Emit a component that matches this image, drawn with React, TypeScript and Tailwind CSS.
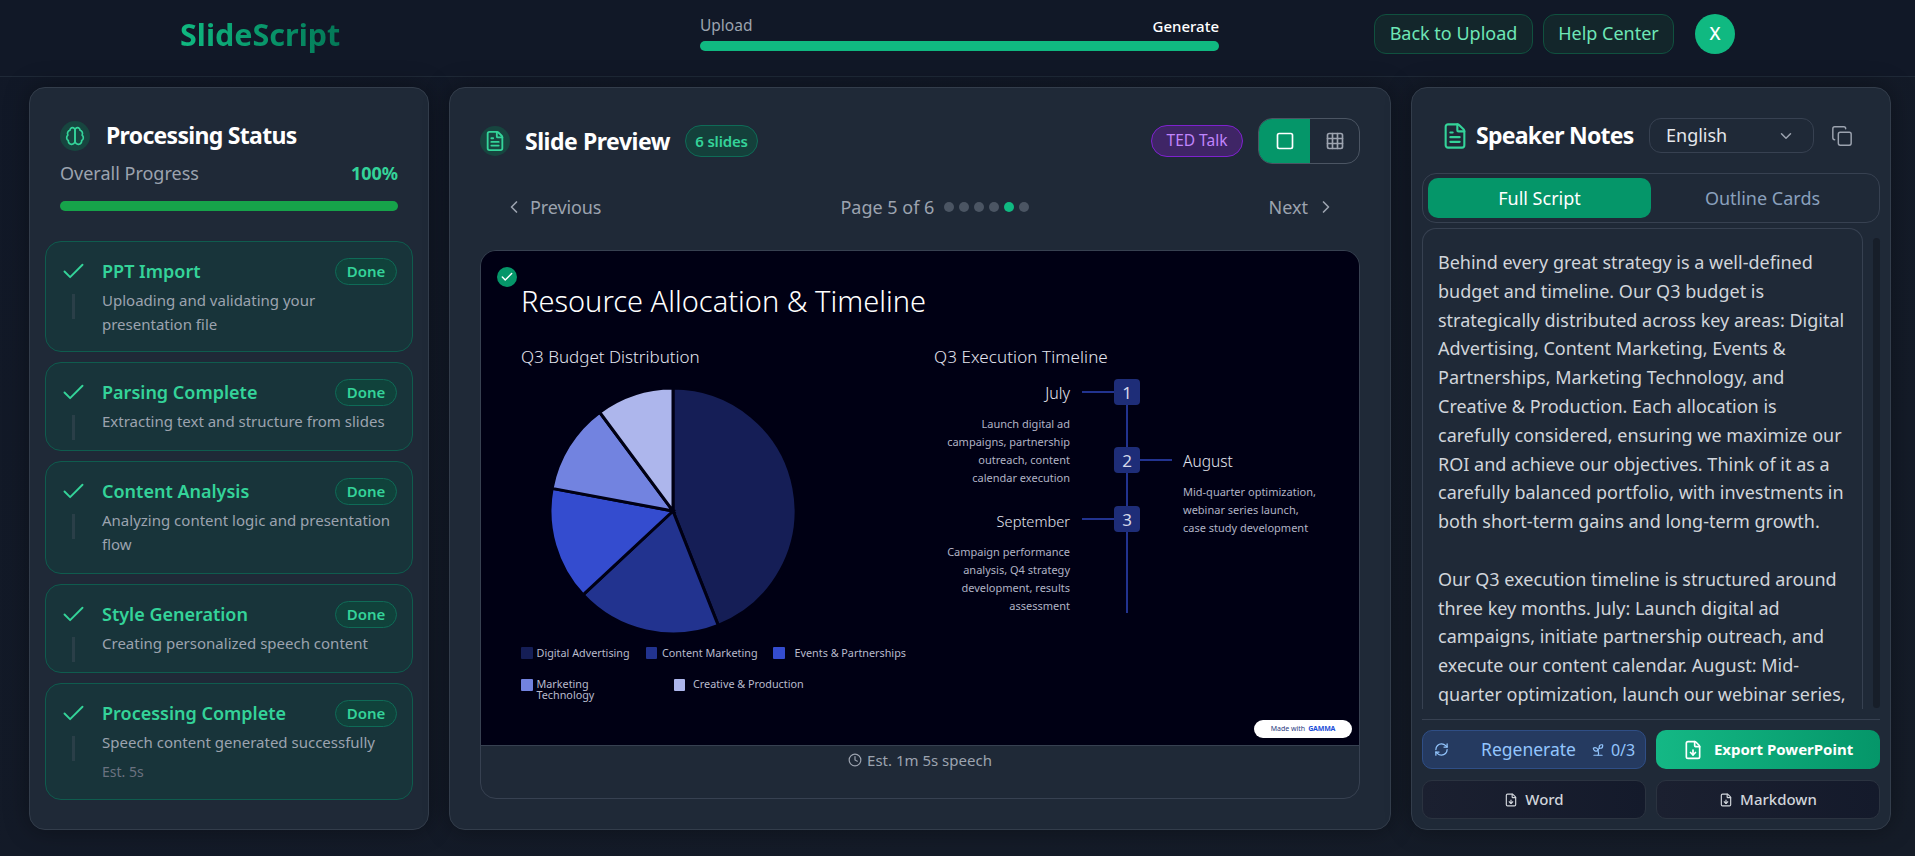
import React from "react";
import {
  Check,
  ChevronDown,
  ChevronLeft,
  ChevronRight,
  Clock,
  Copy,
  FileDown,
  FileText,
  Grid3x3,
  RefreshCw,
  Sprout,
  Square,
} from "lucide-react";

function BrainIcon({ className }: { className?: string }) {
  return (
    <svg viewBox="0 0 24 24" fill="none" stroke="currentColor" strokeWidth="2" strokeLinecap="round" strokeLinejoin="round" className={className}>
      <path d="M12 5a3 3 0 1 0-5.997.125 4 4 0 0 0-2.526 5.77 4 4 0 0 0 .556 6.588A4 4 0 1 0 12 18Z" />
      <path d="M12 5a3 3 0 1 1 5.997.125 4 4 0 0 1 2.526 5.77 4 4 0 0 1-.556 6.588A4 4 0 1 1 12 18Z" />
    </svg>
  );
}

const steps = [
  { t: "PPT Import", d: "Uploading and validating your presentation file", h: "h-[111px]" },
  { t: "Parsing Complete", d: "Extracting text and structure from slides", h: "h-[89px]" },
  { t: "Content Analysis", d: "Analyzing content logic and presentation flow", h: "h-[113px]" },
  { t: "Style Generation", d: "Creating personalized speech content", h: "h-[89px]" },
  { t: "Processing Complete", d: "Speech content generated successfully", h: "h-[117px]", est: "Est. 5s" },
];

function StepCard({ t, d, h, est }: { t: string; d: string; h: string; est?: string }) {
  return (
    <div className={`${h} flex rounded-[16px] border border-[#0f5c4e] bg-[#18343a] pl-[14px] pr-[15px] pt-[16px]`}>
      <div className="flex w-[27px] shrink-0 flex-col items-center">
        <Check size={27} strokeWidth={1.7} className="text-[#34d399]" />
        <div className="mt-[9px] h-[25px] w-[3px] bg-[#2a3f48]" />
      </div>
      <div className="ml-[15px] min-w-0 flex-1">
        <div className="flex h-[26px] items-center justify-between">
          <span className="text-[18px] font-semibold text-[#34d399]">{t}</span>
          <span className="flex h-[27px] w-[62px] shrink-0 items-center justify-center rounded-full border border-[#0f6b57] bg-[#10423b] text-[15px] font-semibold text-[#34d399]">
            Done
          </span>
        </div>
        <p className="mt-[4px] text-[15px] leading-[24px] text-[#9ca3af]">{d}</p>
        {est && <p className="mt-[8px] text-[14px] leading-[20px] text-[#6b7280]">{est}</p>}
      </div>
    </div>
  );
}

const slices = [
  { from: 0, to: 158.4, c: "#151e56" },
  { from: 158.4, to: 227, c: "#22338f" },
  { from: 227, to: 280.6, c: "#344ccf" },
  { from: 280.6, to: 323.4, c: "#7283e0" },
  { from: 323.4, to: 360, c: "#adb6ec" },
];

function pt(a: number) {
  const r = ((a - 90) * Math.PI) / 180;
  return `${125 + 123 * Math.cos(r)} ${125 + 123 * Math.sin(r)}`;
}

function Pie() {
  return (
    <svg width="250" height="250" viewBox="0 0 250 250" className="block">
      {slices.map((s) => (
        <path
          key={s.from}
          d={`M125 125 L${pt(s.from)} A123 123 0 ${s.to - s.from > 180 ? 1 : 0} 1 ${pt(s.to)} Z`}
          fill={s.c}
          stroke="#000014"
          strokeWidth="3"
        />
      ))}
    </svg>
  );
}

function Swatch({ c }: { c: string }) {
  return <span className="h-[11.5px] w-[11.5px] shrink-0 rounded-[1px]" style={{ backgroundColor: c }} />;
}

function NumBox({ n, left, right, className }: { n: number; left?: boolean; right?: boolean; className?: string }) {
  return (
    <div className={`flex h-[26px] items-center ${className ?? ""}`}>
      <span className={`h-[2px] w-[32px] ${left ? "bg-[#22338f]" : ""}`} />
      <span className="relative flex h-[26px] w-[26px] items-center justify-center rounded-[4px] bg-[#1e2d78] text-[17px] leading-none text-[#d5d8ea]">
        {n}
      </span>
      <span className={`h-[2px] w-[32px] ${right ? "bg-[#22338f]" : ""}`} />
    </div>
  );
}

function Slide() {
  return (
    <div className="relative h-[494px] bg-[#000014] pl-[40px] pt-[29px] font-['Noto_Sans',sans-serif] text-[#e4e6f0]">
      <span className="absolute left-[16px] top-[16px] flex h-[20px] w-[20px] items-center justify-center rounded-full bg-[#059669]">
        <Check size={14} strokeWidth={2.5} className="text-white" />
      </span>
      <h3 className="h-[42px] text-[29px] font-light leading-[42px] text-white">Resource Allocation &amp; Timeline</h3>
      <div className="mt-[23px] flex">
        <div className="w-[413px] shrink-0">
          <h4 className="h-[24px] text-[17px] font-light leading-[24px]">Q3 Budget Distribution</h4>
          <div className="ml-[27px] mt-[17px]">
            <Pie />
          </div>
          <div className="mt-[11px] flex h-[12px] items-center text-[10.8px] leading-[12px] text-[#b8bbcc]">
            <Swatch c="#151e56" />
            <span className="ml-[4px] w-[109px]">Digital Advertising</span>
            <Swatch c="#22338f" />
            <span className="ml-[5px] w-[111px]">Content Marketing</span>
            <Swatch c="#344ccf" />
            <span className="ml-[10px] whitespace-nowrap">Events &amp; Partnerships</span>
          </div>
          <div className="mt-[20px] flex items-start text-[10.8px] leading-[10.5px] text-[#b8bbcc]">
            <Swatch c="#7283e0" />
            <span className="ml-[4px] w-[137px]">
              Marketing
              <br />
              Technology
            </span>
            <Swatch c="#adb6ec" />
            <span className="ml-[8px]">Creative &amp; Production</span>
          </div>
        </div>
        <div className="flex-1">
          <h4 className="h-[24px] text-[17px] font-light leading-[24px] tracking-[0.1px]">Q3 Execution Timeline</h4>
          <div className="mt-[10px] flex">
            <div className="w-[136px] shrink-0 text-right">
              <p className="mt-[2px] text-[16px] font-light leading-[24px]">July</p>
              <p className="mt-[10px] text-[11px] leading-[18px] text-[#b0b3c5]">
                Launch digital ad
                <br />
                campaigns, partnership
                <br />
                outreach, content
                <br />
                calendar execution
              </p>
              <p className="mt-[22px] text-[14.6px] font-light leading-[24px]">September</p>
              <p className="mt-[10px] text-[11px] leading-[18px] text-[#b0b3c5]">
                Campaign performance
                <br />
                analysis, Q4 strategy
                <br />
                development, results
                <br />
                assessment
              </p>
            </div>
            <div className="relative ml-[12px] w-[90px] shrink-0">
              <span className="absolute left-[44px] top-[13px] h-[221px] w-[2px] bg-[#22338f]" />
              <NumBox n={1} left />
              <NumBox n={2} right className="mt-[42px]" />
              <NumBox n={3} left className="mt-[33px]" />
            </div>
            <div className="ml-[11px] flex-1">
              <p className="mt-[70px] text-[15.5px] font-light leading-[24px]">August</p>
              <p className="mt-[10px] text-[11px] leading-[18px] text-[#b0b3c5]">
                Mid-quarter optimization,
                <br />
                webinar series launch,
                <br />
                case study development
              </p>
            </div>
          </div>
        </div>
      </div>
      <div className="absolute bottom-[7px] right-[7px] flex h-[18px] w-[98px] items-center justify-center gap-[3px] rounded-full bg-white text-[7px] text-[#2a3a80]">
        <span>Made with</span>
        <span className="font-bold tracking-tight text-[#1d4ed8]">GAMMA</span>
      </div>
    </div>
  );
}

function DocButton({ label }: { label: string }) {
  return (
    <button className="flex h-[39px] w-1/2 min-w-0 items-center justify-center gap-[7px] rounded-[10px] border border-[#2b3340] bg-gradient-to-r from-[#1b2030] to-[#141a2b] text-[15px] font-medium text-[#d1d5db]">
      <FileDown size={14} />
      {label}
    </button>
  );
}

export default function App() {
  const para1 =
    "Behind every great strategy is a well-defined budget and timeline. Our Q3 budget is strategically distributed across key areas: Digital Advertising, Content Marketing, Events & Partnerships, Marketing Technology, and Creative & Production. Each allocation is carefully considered, ensuring we maximize our ROI and achieve our objectives. Think of it as a carefully balanced portfolio, with investments in both short-term gains and long-term growth.";
  const para2 =
    "Our Q3 execution timeline is structured around three key months. July: Launch digital ad campaigns, initiate partnership outreach, and execute our content calendar. August: Mid-quarter optimization, launch our webinar series, and develop case studies. September: Analyze campaign performance and develop our Q4 strategy.";
  return (
    <div className="flex h-[856px] w-[1915px] flex-col overflow-hidden bg-gradient-to-br from-[#111827] to-[#151c28] font-['Noto_Sans',sans-serif] text-white">
      <header className="flex h-[77px] shrink-0 items-center border-b border-[#1f2937] bg-[#111827] pb-[9px] pl-[180px]">
        <div className="w-[160px] whitespace-nowrap bg-gradient-to-r from-[#10b981] to-[#047857] bg-clip-text text-[30.5px] font-bold leading-[40px] text-transparent">
          SlideScript
        </div>
        <div className="ml-[360px] w-[519px]">
          <div className="flex h-[20px] items-center justify-between">
            <span className="text-[15.5px] text-[#9ca3af]">Upload</span>
            <span className="text-[15px] font-medium text-white">Generate</span>
          </div>
          <div className="mt-[5px] h-[10px] rounded-full bg-[#10b981]" />
        </div>
        <button className="ml-[155px] flex h-[40px] w-[159px] items-center justify-center rounded-[12px] border border-[#10513f] bg-[#13262b] text-[18px] text-[#6ee7b7]">
          Back to Upload
        </button>
        <button className="ml-[10px] flex h-[40px] w-[131px] items-center justify-center rounded-[12px] border border-[#10513f] bg-[#13262b] text-[18px] text-[#6ee7b7]">
          Help Center
        </button>
        <div className="ml-[21px] flex h-[40px] w-[40px] items-center justify-center rounded-full bg-[#10b981] text-[18px] font-medium text-white">
          X
        </div>
      </header>

      <main className="flex flex-1 gap-[20px] pl-[29px] pr-[24px] pt-[10px]">
        {/* Left */}
        <section className="h-[743px] w-[400px] shrink-0 rounded-[16px] border border-[#333d4b] bg-[#1f2937] pl-[15px] pr-[15px] pt-[33px] shadow-[0_0_24px_rgba(0,0,0,0.35)]">
          <div className="ml-[15px] mr-[15px]">
            <div className="flex h-[30px] items-center">
              <span className="flex h-[30px] w-[30px] items-center justify-center rounded-full bg-[#17453f]">
                <BrainIcon className="h-[20px] w-[20px] text-[#34d399]" />
              </span>
              <h2 className="ml-[16px] pb-[2px] text-[23px] font-bold tracking-[-0.7px] text-white">Processing Status</h2>
            </div>
            <div className="mt-[10px] flex h-[24px] items-center justify-between text-[18px]">
              <span className="text-[#9ca3af]">Overall Progress</span>
              <span className="font-bold text-[#34d399]">100%</span>
            </div>
            <div className="mt-[16px] h-[10px] rounded-full bg-[#16a34a]" />
          </div>
          <div className="mt-[30px] flex flex-col gap-[10px]">
            {steps.map((s) => (
              <StepCard key={s.t} {...s} />
            ))}
          </div>
        </section>

        {/* Middle */}
        <section className="h-[743px] flex-1 rounded-[16px] border border-[#333d4b] bg-[#1f2937] pl-[30px] pr-[30px] pt-[30px] shadow-[0_0_24px_rgba(0,0,0,0.35)]">
          <div className="flex h-[46px] items-center">
            <span className="flex h-[30px] w-[30px] items-center justify-center rounded-full bg-[#17453f]">
              <FileText size={22} className="text-[#34d399]" />
            </span>
            <h2 className="ml-[15px] text-[23px] font-bold tracking-[-0.46px] text-white">Slide Preview</h2>
            <span className="ml-[15px] flex h-[32px] w-[73px] items-center justify-center rounded-full border border-[#0f6b57] bg-[#14403b] text-[15px] font-semibold tracking-[-0.2px] text-[#34d399]">
              6 slides
            </span>
            <span className="ml-auto flex h-[32px] w-[92px] items-center justify-center rounded-full border border-[#7e22ce] bg-[#3f2566] text-[15.5px] text-[#c084fc]">
              TED Talk
            </span>
            <div className="ml-[15px] flex h-[46px] w-[102px] overflow-hidden rounded-[14px] border border-[#4b5563]">
              <span className="flex w-[51px] items-center justify-center bg-[#059669]">
                <Square size={20} className="text-white" />
              </span>
              <span className="flex flex-1 items-center justify-center">
                <Grid3x3 size={20} className="text-[#9ca3af]" />
              </span>
            </div>
          </div>
          <div className="mt-[28px] flex h-[30px] items-center justify-between pl-[24px] pr-[24px] text-[18px] text-[#9ca3af]">
            <div className="flex items-center gap-[6px]">
              <ChevronLeft size={20} />
              <span className="tracking-[-0.1px]">Previous</span>
            </div>
            <div className="flex items-center gap-[10px]">
              <span>Page 5 of 6</span>
              <div className="flex gap-[5px]">
                {[0, 1, 2, 3, 4, 5].map((i) => (
                  <span key={i} className={i === 4 ? "h-[10px] w-[10px] rounded-full bg-[#10b981]" : "h-[10px] w-[10px] rounded-full bg-[#4b5563]"} />
                ))}
              </div>
            </div>
            <div className="flex items-center gap-[8px]">
              <span>Next</span>
              <ChevronRight size={20} />
            </div>
          </div>
          <div className="mt-[28px] h-[549px] overflow-hidden rounded-[16px] border border-[#374151]">
            <Slide />
            <div className="flex h-[53px] items-start justify-center gap-[5px] border-t border-[#374151] pt-[3px] text-[15px] text-[#9ca3af]">
              <Clock size={14} className="mt-[4px]" />
              Est. 1m 5s speech
            </div>
          </div>
        </section>

        {/* Right */}
        <section className="flex h-[743px] w-[480px] shrink-0 flex-col rounded-[16px] border border-[#333d4b] bg-[#1f2937] pl-[10px] pr-[10px] pt-[30px] shadow-[0_0_24px_rgba(0,0,0,0.35)]">
          <div className="flex h-[35px] items-center pl-[19px]">
            <FileText size={28} strokeWidth={1.8} className="text-[#34d399]" />
            <h2 className="ml-[7px] w-[173px] text-[23px] font-bold tracking-[-0.75px] text-white">Speaker Notes</h2>
            <div className="flex h-[35px] w-[165px] items-center justify-between rounded-[12px] border border-[#374151] pl-[16px] pr-[18px] text-[18px] text-[#e5e7eb]">
              English
              <ChevronDown size={18} className="text-[#9ca3af]" />
            </div>
            <Copy size={22} strokeWidth={1.6} className="ml-[17px] text-[#9ca3af]" />
          </div>
          <div className="mt-[20px] flex h-[50px] items-center rounded-[14px] border border-[#374151] px-[5px] text-[18px]">
            <div className="flex h-[40px] w-[223px] items-center justify-center rounded-[10px] bg-[#059669] pt-[1px] text-white">Full Script</div>
            <div className="flex-1 pt-[1px] text-center text-[#8aa0bd]">Outline Cards</div>
          </div>
          <div className="mt-[5px] flex h-[481px] gap-[10px]">
            <div className="w-[441px] overflow-hidden rounded-t-[14px] border-x border-t border-[#374151] px-[15px] pt-[19px] text-[18px] leading-[28.8px] text-[#d1d5db]">
              <p>{para1}</p>
              <p className="mt-[28.8px]">{para2}</p>
            </div>
            <div className="mt-[10px] h-[470px] w-[7px] rounded-full bg-[#171e29]" />
          </div>
          <div className="mt-[10px] border-t border-[#374151] pt-[10px]">
            <div className="flex gap-[10px]">
              <button className="flex h-[39px] w-1/2 min-w-0 items-center rounded-[10px] border border-[#2f4e86] bg-[#253a60] pl-[11px] text-[#93c5fd]">
                <RefreshCw size={15} />
                <span className="ml-[32px] text-[17.5px]">Regenerate</span>
                <Sprout size={14} className="ml-[15px]" />
                <span className="ml-[6px] text-[16px]">0/3</span>
              </button>
              <button className="flex h-[39px] w-1/2 min-w-0 items-center justify-center gap-[11px] rounded-[10px] bg-gradient-to-r from-[#14b885] to-[#059669] text-[15px] font-bold text-white">
                <FileDown size={20} />
                Export PowerPoint
              </button>
            </div>
            <div className="mt-[11px] flex gap-[10px]">
              <DocButton label="Word" />
              <DocButton label="Markdown" />
            </div>
          </div>
        </section>
      </main>
    </div>
  );
}
